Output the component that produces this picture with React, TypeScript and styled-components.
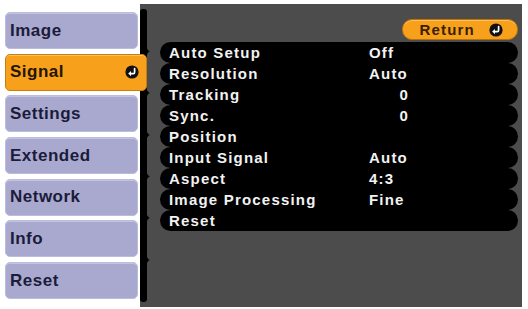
import React from "react";
import styled, { createGlobalStyle } from "styled-components";

const GlobalStyle = createGlobalStyle`
  html, body {
    margin: 0;
    padding: 0;
    background: #ffffff;
  }
  body {
    font-family: "Liberation Sans", Arial, sans-serif;
  }
`;

const tabs = ["Image", "Signal", "Settings", "Extended", "Network", "Info", "Reset"];
const activeTab = "Signal";

type Item = { label: string; value?: string; numeric?: boolean };

const items: Item[] = [
  { label: "Auto Setup", value: "Off" },
  { label: "Resolution", value: "Auto" },
  { label: "Tracking", value: "0", numeric: true },
  { label: "Sync.", value: "0", numeric: true },
  { label: "Position" },
  { label: "Input Signal", value: "Auto" },
  { label: "Aspect", value: "4:3" },
  { label: "Image Processing", value: "Fine" },
  { label: "Reset" },
];

// tab boundaries inside the panel, where the left edge strip gets a brace tip
const braceTips = [47.5, 89, 131, 172.5, 214, 256];

const EnterIcon = () => (
  <svg width="14" height="14" viewBox="0 0 14 14">
    <circle cx="7" cy="7" r="6.6" fill="#111" />
    <path
      d="M9.6 3.6 V7.2 Q9.6 8.6 8.2 8.6 H5.6"
      fill="none"
      stroke="#fff"
      strokeWidth="1.7"
      strokeLinecap="round"
    />
    <path d="M6 6 L3.2 8.6 L6 11.2 Z" fill="#fff" />
  </svg>
);

const EdgeStrip = () => (
  <svg width="10" height="303" viewBox="0 0 10 303">
    <rect x="0" y="5" width="7" height="293" rx="3" fill="#000" />
    {braceTips.map((y) => (
      <path
        key={y}
        d={`M6 ${y - 7} Q7 ${y} 10.5 ${y} Q7 ${y} 6 ${y + 7} Z`}
        fill="#000"
      />
    ))}
  </svg>
);

const App = () => {
  return (
    <>
      <GlobalStyle />
      <Screen>
        <TabColumn>
          {tabs.map((t) => (
            <Tab key={t} $active={t === activeTab}>
              <span>{t}</span>
              {t === activeTab && <EnterIcon />}
            </Tab>
          ))}
        </TabColumn>
        <Panel>
          <EdgeStrip />
          <Content>
            <ReturnButton>
              <span>Return</span>
              <EnterIcon />
            </ReturnButton>
            <List>
              {items.map((it) => (
                <Row key={it.label}>
                  <Label>{it.label}</Label>
                  {it.value && <Value $numeric={it.numeric}>{it.value}</Value>}
                </Row>
              ))}
            </List>
          </Content>
        </Panel>
      </Screen>
    </>
  );
};

const Screen = styled.div`
  width: 528px;
  height: 309px;
  display: flex;
  background: #ffffff;
  overflow: hidden;
`;

const TabColumn = styled.div`
  width: 133px;
  margin-left: 5px;
  padding-top: 12px;
  display: flex;
  flex-direction: column;
  gap: 4.7px;
  flex-shrink: 0;
`;

const Tab = styled.div<{ $active?: boolean }>`
  position: relative;
  z-index: 2;
  box-sizing: border-box;
  height: 37px;
  width: ${(p) => (p.$active ? "142px" : "133px")};
  display: flex;
  align-items: center;
  justify-content: space-between;
  padding: 0 7px 0 4px;
  border-radius: 5px;
  background: ${(p) => (p.$active ? "#f7a01c" : "#a9a9cf")};
  border: 1px solid ${(p) => (p.$active ? "#c97d0c" : "#bcbcdc")};
  box-shadow: ${(p) =>
    p.$active ? "inset 0 1px 0 #ffc25a" : "inset 0 1px 0 #c4c4e2"};
  color: ${(p) => (p.$active ? "#241400" : "#1b1b3a")};
  font-size: 17px;
  font-weight: 700;
  letter-spacing: 0.5px;
`;

const Panel = styled.div`
  margin-left: 2px;
  margin-top: 4px;
  width: 382px;
  height: 303px;
  background: #4c4c4c;
  display: flex;
  flex-shrink: 0;
`;

const Content = styled.div`
  flex: 1;
  display: flex;
  flex-direction: column;
  padding: 15px 4px 0 10px;
`;

const ReturnButton = styled.div`
  align-self: flex-end;
  box-sizing: border-box;
  width: 116px;
  height: 21px;
  border-radius: 10px;
  background: #f7a01c;
  border: 1px solid #b97209;
  box-shadow: inset 0 1px 0 #ffc25a;
  display: flex;
  align-items: center;
  justify-content: flex-end;
  gap: 14px;
  padding-right: 14px;
  color: #3a2000;
  font-size: 15px;
  font-weight: 700;
  letter-spacing: 1.2px;
`;

const List = styled.div`
  margin-top: 2px;
  display: flex;
  flex-direction: column;
`;

const Row = styled.div`
  height: 21px;
  border-radius: 10.5px;
  background: #000;
  display: flex;
  align-items: center;
  color: #f2f2f2;
  font-size: 15px;
  font-weight: 700;
  letter-spacing: 1.2px;
`;

const Label = styled.span`
  width: 200px;
  padding-left: 9px;
  white-space: nowrap;
`;

const Value = styled.span<{ $numeric?: boolean }>`
  width: 40px;
  text-align: ${(p) => (p.$numeric ? "right" : "left")};
  white-space: nowrap;
`;

export default App;
